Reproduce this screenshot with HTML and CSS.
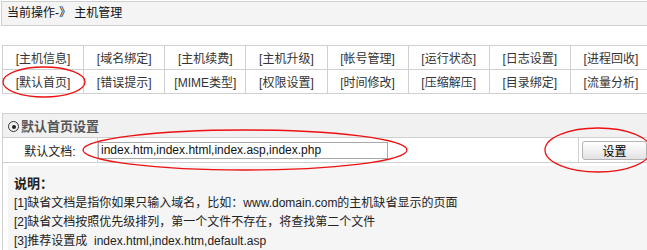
FILE: index.html
```html
<!DOCTYPE html>
<html lang="zh-CN">
<head>
<meta charset="utf-8">
<title>主机管理</title>
<link rel="stylesheet" href="styles.css">
</head>
<body>
<div class="page">
  <div class="crumb">当前操作-》 主机管理</div>

  <table class="tabs">
    <tr>
      <td>[主机信息]</td><td>[域名绑定]</td><td>[主机续费]</td><td>[主机升级]</td>
      <td>[帐号管理]</td><td>[运行状态]</td><td>[日志设置]</td><td>[进程回收]</td>
    </tr>
    <tr>
      <td>[默认首页]</td><td>[错误提示]</td><td>[MIME类型]</td><td>[权限设置]</td>
      <td>[时间修改]</td><td>[压缩解压]</td><td>[目录绑定]</td><td>[流量分析]</td>
    </tr>
  </table>

  <table class="panel">
    <colgroup><col class="c-label"><col class="c-field"><col class="c-action"></colgroup>
    <tr class="panel-title">
      <th colspan="3"><span class="radio"></span>默认首页设置</th>
    </tr>
    <tr class="form-row">
      <td class="label">默认文档:</td>
      <td class="field"><input class="text-input" type="text" value="index.htm,index.html,index.asp,index.php"></td>
      <td class="action"><button class="btn" type="button">设置</button></td>
    </tr>
    <tr>
      <td class="desc-cell" colspan="3">
        <div class="desc">
          <div class="desc-title">说明：</div>
          <div>[1]缺省文档是指你如果只输入域名，比如：www.domain.com的主机缺省显示的页面</div>
          <div>[2]缺省文档按照优先级排列，第一个文件不存在，将查找第二个文件</div>
          <div>[3]推荐设置成&nbsp; index.html,index.htm,default.asp</div>
        </div>
      </td>
    </tr>
  </table>

  <svg class="marks" width="647" height="250" viewBox="0 0 647 250">
    <ellipse cx="44" cy="82" rx="41" ry="15" />
    <ellipse cx="245" cy="150" rx="162" ry="20" />
    <ellipse cx="598" cy="150" rx="53" ry="22" />
  </svg>
</div>
</body>
</html>
```

FILE: styles.css
```css
html, body {
  margin: 0;
  padding: 0;
  background: #fff;
}
body {
  font: 12px "Liberation Sans", "Noto Sans CJK SC", sans-serif;
  color: #222;
}
.page {
  position: relative;
  width: 647px;
  height: 250px;
  overflow: hidden;
}
.crumb {
  margin: 1px 0 0 1px;
  width: 660px;
  height: 23px;
  line-height: 23px;
  padding-left: 5px;
  border: 1px solid #cfcfcf;
  background: #f4f4f4;
  color: #111;
}
.tabs {
  margin: 19px 0 0 2px;
  width: 650px;
  border-collapse: collapse;
  table-layout: fixed;
}
.tabs tr {
  height: 24px;
}
.tabs td {
  border: 1px solid #d0d0d0;
  padding: 0;
  text-align: center;
  color: #333;
  white-space: nowrap;
}
.panel {
  margin: 19px 0 0 2px;
  width: 650px;
  border-collapse: collapse;
  table-layout: fixed;
}
.c-label { width: 95px; }
.c-field { width: 481px; }
.c-action { width: 74px; }
.panel td, .panel th {
  border: 1px solid #d0d0d0;
  padding: 0;
}
.panel-title {
  height: 24px;
}
.panel-title th {
  background: #f1f1f1;
  text-align: left;
  font-size: 13px;
  font-weight: bold;
  color: #555;
  padding-left: 5px;
  white-space: nowrap;
}
.radio {
  display: inline-block;
  box-sizing: border-box;
  width: 11px;
  height: 11px;
  border: 1px solid #333;
  border-radius: 50%;
  margin-right: 2px;
  vertical-align: -1px;
  position: relative;
}
.radio::after {
  content: "";
  position: absolute;
  left: 2.5px;
  top: 2.5px;
  width: 4px;
  height: 4px;
  border-radius: 50%;
  background: #222;
}
.form-row {
  height: 25px;
}
.label {
  text-align: center;
  color: #222;
}
.field {
  padding-left: 0;
}
.text-input {
  box-sizing: border-box;
  display: block;
  width: 290px;
  height: 17px;
  margin: 0;
  padding: 0 2px;
  border: 1px solid #a8a8a8;
  font: 12px "Liberation Sans", "Noto Sans CJK SC", sans-serif;
  color: #111;
  background: #fff;
}
.action {
  padding-left: 3px !important;
}
.btn {
  display: block;
  box-sizing: border-box;
  width: 65px;
  height: 19px;
  padding: 0;
  border: 1px solid #b4b4b4;
  border-radius: 3px;
  background: linear-gradient(#ffffff, #f1f1f1 50%, #e2e2e2);
  font: 12px "Liberation Sans", "Noto Sans CJK SC", sans-serif;
  color: #000;
}
.desc-cell {
  padding: 3px 0 0 5px !important;
  border-bottom: none !important;
  vertical-align: top;
}
.desc {
  background: #f5f5f5;
  padding: 8px 6px 20px;
  line-height: 19px;
  color: #222;
  white-space: nowrap;
}
.desc-title {
  font-weight: bold;
  font-size: 13px;
  margin-bottom: 1px;
}
.marks {
  position: absolute;
  left: 0;
  top: 0;
  pointer-events: none;
}
.marks ellipse {
  fill: none;
  stroke: #ee1111;
  stroke-width: 1.3;
}
```
